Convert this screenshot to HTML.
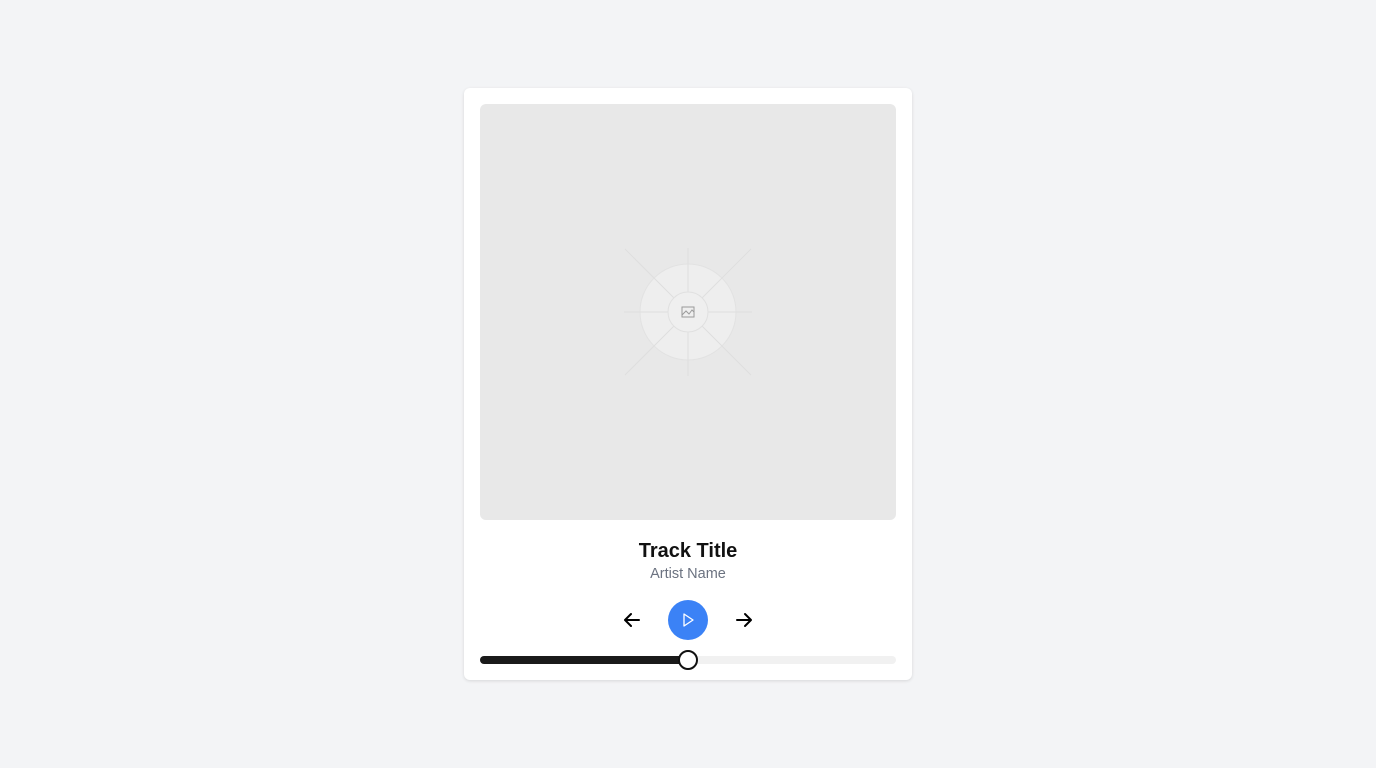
<!DOCTYPE html>
<html><head><style>
body{margin:0;width:1376px;height:768px;background:#f3f4f6;font-family:"Liberation Sans",sans-serif;position:relative;overflow:hidden}
.card{position:absolute;left:464px;top:88px;width:448px;height:592px;background:#fff;border-radius:6px;box-shadow:0 1px 3px rgba(0,0,0,.12)}
.art{position:absolute;left:16px;top:16px;width:416px;height:416px;background:#e8e8e8;border-radius:6px;overflow:hidden}
.t{position:absolute;left:0;width:448px;text-align:center}
</style></head><body>
<div class="card">
<div class="art">
<svg width="416" height="416" style="position:absolute;left:0;top:0">
<circle cx="208" cy="208" r="48" fill="rgba(255,255,255,0.25)" stroke="#e2e2e2"/>
<g stroke="#dedede" stroke-width="1" fill="none">
<line x1="208" y1="144" x2="208" y2="272"/>
<line x1="144" y1="208" x2="272" y2="208"/>
<line x1="145" y1="145" x2="271" y2="271"/>
<line x1="271" y1="145" x2="145" y2="271"/>
</g>
<circle cx="208" cy="208" r="20" fill="#efefef" stroke="#e0e0e0"/>
<g stroke="#9a9a9a" stroke-width="1" fill="none">
<rect x="202" y="203" width="12" height="10"/>
<path d="M202 211 L206 207 L209 210 L212 206 L214 208"/>
</g>
</svg>
</div>
<div class="t" style="top:452px;font-size:20px;font-weight:bold;color:#111">Track Title</div>
<div class="t" style="top:478px;font-size:14.5px;color:#6b7280">Artist Name</div>
<svg width="448" height="100" style="position:absolute;left:0;top:510px">
<g stroke="#000" stroke-width="2" fill="none" stroke-linecap="round" stroke-linejoin="round">
<path d="M175 22 H161 M167 16 L161 22 L167 28"/>
<path d="M273 22 H287 M281 16 L287 22 L281 28"/>
</g>
<circle cx="224" cy="22" r="20" fill="#3b82f6"/>
<path d="M220 16 L229 22 L220 28 Z" fill="none" stroke="#fff" stroke-width="1.3" stroke-linejoin="round"/>
<rect x="16" y="58" width="416" height="8" rx="4" fill="#f1f1f1"/>
<rect x="16" y="58" width="208" height="8" rx="4" fill="#1a1a1a"/>
<circle cx="224" cy="62" r="9" fill="#fff" stroke="#111" stroke-width="2"/>
</svg>
</div>
</body></html>
